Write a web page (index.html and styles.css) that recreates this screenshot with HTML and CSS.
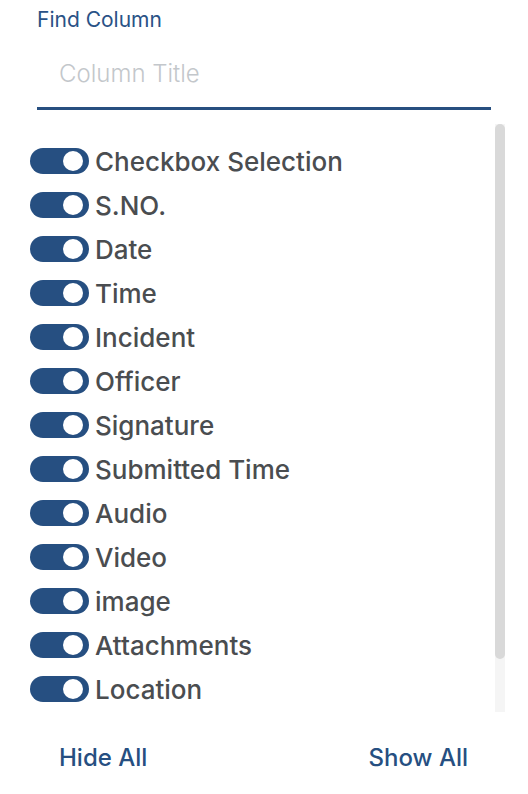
FILE: index.html
```html
<!DOCTYPE html>
<html lang="en">
<head>
<meta charset="utf-8">
<title>Find Column</title>
<link rel="stylesheet" href="styles.css">
</head>
<body>
<div class="panel">
  <div class="search">
    <label class="search-label" for="q">Find Column</label>
    <input id="q" class="search-input" type="text" placeholder="Column Title">
  </div>
  <div class="list-wrap">
    <div class="list">
      <label class="row"><span class="switch"><span class="knob"></span></span><span class="name">Checkbox Selection</span></label>
      <label class="row"><span class="switch"><span class="knob"></span></span><span class="name">S.NO.</span></label>
      <label class="row"><span class="switch"><span class="knob"></span></span><span class="name">Date</span></label>
      <label class="row"><span class="switch"><span class="knob"></span></span><span class="name">Time</span></label>
      <label class="row"><span class="switch"><span class="knob"></span></span><span class="name">Incident</span></label>
      <label class="row"><span class="switch"><span class="knob"></span></span><span class="name">Officer</span></label>
      <label class="row"><span class="switch"><span class="knob"></span></span><span class="name">Signature</span></label>
      <label class="row"><span class="switch"><span class="knob"></span></span><span class="name">Submitted Time</span></label>
      <label class="row"><span class="switch"><span class="knob"></span></span><span class="name">Audio</span></label>
      <label class="row"><span class="switch"><span class="knob"></span></span><span class="name">Video</span></label>
      <label class="row"><span class="switch"><span class="knob"></span></span><span class="name">image</span></label>
      <label class="row"><span class="switch"><span class="knob"></span></span><span class="name">Attachments</span></label>
      <label class="row"><span class="switch"><span class="knob"></span></span><span class="name">Location</span></label>
    </div>
    <div class="scrollbar"><div class="thumb"></div></div>
  </div>
  <div class="actions">
    <button class="btn" type="button">Hide All</button>
    <button class="btn" type="button">Show All</button>
  </div>
</div>
</body>
</html>
```
FILE: styles.css
```css
* { box-sizing: border-box; }
html, body { margin: 0; padding: 0; background: #fff; }
body {
  font-family: Inter, "Noto Sans", sans-serif;
  width: 528px;
  height: 794px;
  overflow: hidden;
}
.panel {
  display: flex;
  flex-direction: column;
  padding: 8px 23px 0 30px;
}
.search {
  display: flex;
  flex-direction: column;
  padding: 0 14px 0 7px;
}
.search-label {
  font-size: 21px;
  line-height: 24px;
  color: #2a5286;
}
.search-input {
  margin-top: 26px;
  border: 0;
  border-bottom: 3px solid #274f80;
  outline: none;
  font-family: inherit;
  font-size: 24px;
  font-weight: 300;
  line-height: 30px;
  height: 52px;
  padding: 0 0 19px 22px;
  color: #444;
  background: transparent;
}
.search-input::placeholder { color: #c3c7cb; }
.list-wrap {
  margin-top: 14px;
  height: 588px;
  display: flex;
}
.list {
  flex: 1;
  overflow: hidden;
  padding: 15px 0;
  display: flex;
  flex-direction: column;
}
.scrollbar {
  width: 10px;
  flex: none;
  background: #f5f5f5;
}
.thumb {
  height: 535px;
  border-radius: 5px;
  background: #d9d9d9;
}
.row {
  display: flex;
  align-items: center;
  gap: 6px;
  height: 44px;
  flex: none;
}
.switch {
  width: 59px;
  height: 26px;
  border-radius: 13px;
  background: #264f81;
  display: flex;
  justify-content: flex-end;
  align-items: center;
  padding-right: 6px;
  flex: none;
}
.knob {
  width: 20px;
  height: 20px;
  border-radius: 50%;
  background: #fff;
}
.name {
  font-size: 26px;
  color: #4a4d50;
  font-weight: 500;
  white-space: nowrap;
}
.actions {
  display: flex;
  justify-content: space-between;
  padding: 23px 28px 0 20px;
}
.btn {
  border: 0;
  background: transparent;
  font-family: inherit;
  font-size: 24px;
  font-weight: 500;
  color: #264f81;
  padding: 8px 9px;
  line-height: 30px;
  cursor: pointer;
}
```
